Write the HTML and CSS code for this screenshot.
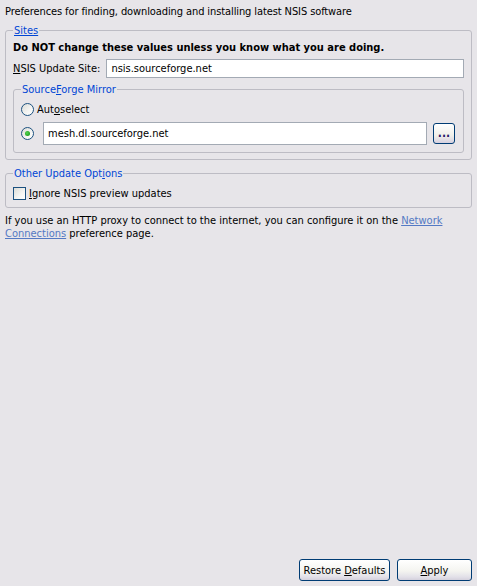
FILE: index.html
```html
<!DOCTYPE html>
<html lang="en">
<head>
    <meta charset="UTF-8">
    <title>NSIS Update Preferences</title>
    <link rel="stylesheet" href="styles.css">
</head>
<body>
    <div class="page">
        <p class="desc">Preferences for finding, downloading and installing latest NSIS software</p>

        <fieldset class="group">
            <legend><u>Sites</u></legend>
            <p class="warning">Do NOT change these values unless you know what you are doing.</p>
            <div class="field-row">
                <label for="updateSite"><u>N</u>SIS Update Site:</label>
                <input id="updateSite" class="text-input" type="text" value="nsis.sourceforge.net">
            </div>

            <fieldset class="group inner">
                <legend>Source<u>F</u>orge Mirror</legend>
                <label class="option-row">
                    <input class="radio" type="radio" name="mirror">
                    <span>Aut<u>o</u>select</span>
                </label>
                <div class="option-row mirror-row">
                    <input class="radio" type="radio" name="mirror" checked>
                    <input class="text-input mirror-input" type="text" value="mesh.dl.sourceforge.net">
                    <button class="browse-btn">...</button>
                </div>
            </fieldset>
        </fieldset>

        <fieldset class="group other">
            <legend>Other Update Opt<u>i</u>ons</legend>
            <label class="option-row">
                <input class="checkbox" type="checkbox">
                <span><u>I</u>gnore NSIS preview updates</span>
            </label>
        </fieldset>

        <p class="proxy-note">If you use an HTTP proxy to connect to the internet, you can configure it on the <a href="#">Network<br>Connections</a> preference page.</p>

        <div class="actions">
            <button class="push-btn restore-btn">Restore <u>D</u>efaults</button>
            <button class="push-btn apply-btn"><u>A</u>pply</button>
        </div>
    </div>
</body>
</html>
```

FILE: styles.css
```css
html, body {
    margin: 0;
    padding: 0;
    height: 100%;
}

body {
    background-color: #e7e5e9;
    font-family: "DejaVu Sans Condensed", "DejaVu Sans", sans-serif;
    font-size: 11px;
    line-height: 13px;
    color: #000;
}

.page {
    box-sizing: border-box;
    height: 586px;
    padding: 5px;
    display: flex;
    flex-direction: column;
}

p {
    margin: 0;
}

u {
    text-decoration: underline;
}

.desc {
    letter-spacing: -0.1px;
}

/* group boxes */
.group {
    margin: 6px 0 0 0;
    padding: 4px 7px 6px 7px;
    border: 1px solid #bdbcc4;
    border-radius: 3px;
    min-width: 0;
}

.group legend {
    padding: 0 1px;
    color: #0046d5;
}

.group.inner {
    margin-top: 5px;
    padding: 7px 7px 7px 7px;
}

.group.other {
    margin-top: 7px;
    padding: 7px 7px 7px 7px;
}

.warning {
    font-weight: bold;
}

.field-row {
    display: flex;
    align-items: center;
    margin-top: 5px;
}

.field-row label {
    margin-right: 6px;
}

.text-input {
    flex: 1;
    box-sizing: border-box;
    height: 19px;
    margin: 0;
    padding: 0 4px;
    border: 1px solid #a3aab4;
    background: #fff;
    font-family: inherit;
    font-size: 11px;
    color: #000;
    outline: none;
}

.option-row {
    display: flex;
    align-items: center;
    height: 13px;
}

.mirror-row {
    height: 23px;
    margin-top: 6px;
}

.mirror-input {
    height: 23px;
    margin-left: 6px;
}

/* XP style radio and checkbox */
.radio,
.checkbox {
    appearance: none;
    -webkit-appearance: none;
    box-sizing: border-box;
    width: 13px;
    height: 13px;
    margin: 0 3px 0 0;
    border: 1px solid #1c5180;
    background: linear-gradient(135deg, #dcdcd7 0%, #f5f5f3 60%, #ffffff 100%);
    flex-shrink: 0;
}

.radio {
    border-radius: 50%;
    position: relative;
}

.radio:checked::after {
    content: "";
    position: absolute;
    left: 3px;
    top: 3px;
    width: 5px;
    height: 5px;
    border-radius: 50%;
    background: radial-gradient(circle at 40% 40%, #55d551 0%, #21a121 70%);
}

.checkbox {
    margin-right: 3px;
}

.browse-btn {
    box-sizing: border-box;
    width: 22px;
    height: 21px;
    margin: 0 1px 0 6px;
    padding: 0 0 2px 0;
    border: 1px solid #003c74;
    border-radius: 3px;
    background: linear-gradient(to bottom, #ffffff 0%, #f0f0ea 60%, #d6d0e0 100%);
    font-family: inherit;
    font-size: 12px;
    font-weight: bold;
    color: #2a1a6a;
    letter-spacing: 0;
}

.proxy-note {
    margin-top: 6px;
}

.proxy-note a {
    color: #5479c4;
}

/* bottom buttons */
.actions {
    margin-top: auto;
    display: flex;
    justify-content: flex-end;
    gap: 7px;
}

.push-btn {
    box-sizing: border-box;
    height: 22px;
    margin: 0;
    padding: 0;
    border: 1px solid #003c74;
    border-radius: 3px;
    background: linear-gradient(to bottom, #ffffff 0%, #f4f4f0 55%, #e2e0e8 85%, #d4d0dc 100%);
    font-family: inherit;
    font-size: 11px;
    color: #000;
}

.restore-btn {
    width: 91px;
}

.apply-btn {
    width: 75px;
}
```
